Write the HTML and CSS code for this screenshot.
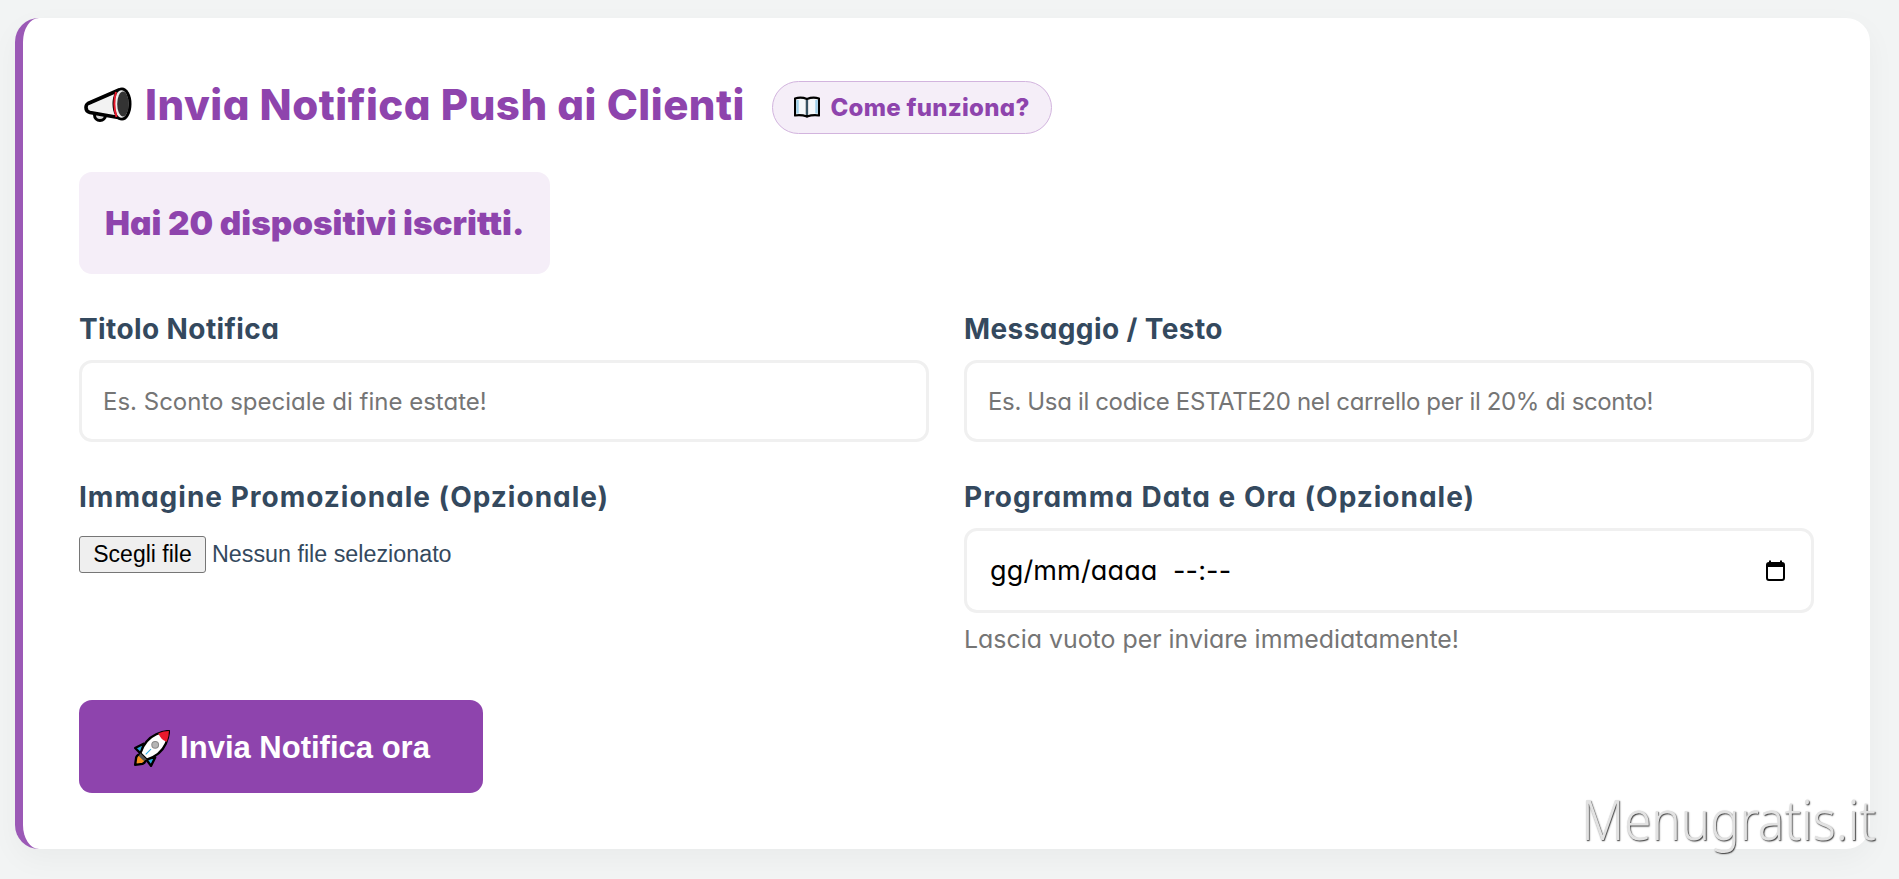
FILE: index.html
```html
<!DOCTYPE html>
<html lang="it">
<head>
<meta charset="utf-8">
<title>Invia Notifica Push ai Clienti</title>
<link rel="stylesheet" href="styles.css">
</head>
<body>
<main class="card">
  <header class="title-row">
    <h1 class="title">
      <svg class="icon-mega" viewBox="0 0 48 36" aria-hidden="true">
        <circle cx="16" cy="28" r="5.5" fill="#d8d8d8" stroke="#000" stroke-width="3"/>
        <path d="M4 16.500 L35 3 L37 31 L6 25.500 Q2 24.500 2 20.500 Q2 17.500 4 16.500 Z" fill="#f2f2f2" stroke="#000" stroke-width="3.600" stroke-linejoin="round"/>
        <ellipse cx="38" cy="17" rx="9.500" ry="16.500" fill="#000"/>
        <ellipse cx="37.500" cy="17" rx="7" ry="13.800" fill="#ececec"/>
        <path d="M32 5 Q28.500 17 32.500 30" fill="none" stroke="#e8192c" stroke-width="2"/>
        <ellipse cx="39" cy="17" rx="5.800" ry="12.500" fill="#333"/>
      </svg>
      <span>Invia Notifica Push ai Clienti</span>
    </h1>
    <button class="help" type="button">
      <svg class="icon-book" viewBox="0 0 26 22" aria-hidden="true">
        <path d="M1 2.500 Q7 0.500 13 3 V20.500 Q7 18.500 1 19.500 Z" fill="#f4f8fb" stroke="#000" stroke-width="2.200" stroke-linejoin="round"/>
        <path d="M25 2.500 Q19 0.500 13 3 V20.500 Q19 18.500 25 19.500 Z" fill="#f4f8fb" stroke="#000" stroke-width="2.200" stroke-linejoin="round"/>
        <path d="M3.500 4 V17.500" stroke="#9fd0ea" stroke-width="2.400"/>
        <path d="M22.500 4 V17.500" stroke="#9fd0ea" stroke-width="2.400"/>
        <path d="M13 4 V19" stroke="#6fa8c9" stroke-width="1"/>
      </svg>
      <span>Come funziona?</span>
    </button>
  </header>

  <div class="info"><strong>Hai 20 dispositivi iscritti.</strong></div>

  <form class="form-grid">
    <div class="field">
      <label class="label">Titolo Notifica</label>
      <input class="text-input" type="text" placeholder="Es. Sconto speciale di fine estate!">
    </div>
    <div class="field">
      <label class="label">Messaggio / Testo</label>
      <input class="text-input text-input-tight" type="text" placeholder="Es. Usa il codice ESTATE20 nel carrello per il 20% di sconto!">
    </div>
    <div class="field">
      <label class="label label-wide">Immagine Promozionale (Opzionale)</label>
      <div class="file-row">
        <button class="file-btn" type="button">Scegli file</button>
        <span class="file-name">Nessun file selezionato</span>
      </div>
    </div>
    <div class="field">
      <label class="label label-wide">Programma Data e Ora (Opzionale)</label>
      <div class="date-input">
        <span class="date-text">gg/mm/aaaa&nbsp;&nbsp;--:--</span>
        <svg class="icon-cal" viewBox="0 0 19 21" aria-hidden="true">
          <path d="M4 0.500 V4 M15 0.500 V4" stroke="#000" stroke-width="2"/>
          <rect x="1" y="3" width="17" height="17" rx="2" fill="none" stroke="#000" stroke-width="2"/>
          <rect x="1" y="3" width="17" height="4" fill="#000"/>
        </svg>
      </div>
      <p class="hint">Lascia vuoto per inviare immediatamente!</p>
    </div>
  </form>

  <button class="submit" type="button">
    <svg class="icon-rocket" viewBox="0 0 35 35" aria-hidden="true">
      <path d="M2 33 L3 26 Q4 23 7 23 L12 28 Q12 31 9 32 Z" fill="#f7931e" stroke="#000" stroke-width="2.200" stroke-linejoin="round"/>
      <path d="M10 13 L2 17 L8 23 Z" fill="#29abe2" stroke="#000" stroke-width="2.200" stroke-linejoin="round"/>
      <path d="M21 26 L17 34 L12 27 Z" fill="#29abe2" stroke="#000" stroke-width="2.200" stroke-linejoin="round"/>
      <path d="M7 22 Q11 9 22 4 Q29 1 34 1 Q34 6 31 13 Q26 24 13 28 Z" fill="#fff" stroke="#000" stroke-width="2.200" stroke-linejoin="round"/>
      <path d="M24 3 Q29 1 34 1 Q34 6 32 11 Q26 9 24 3 Z" fill="#e8192c"/>
      <path d="M7 22 L13 28 L10 29 L5.500 24.500 Z" fill="#555"/>
      <circle cx="21" cy="14" r="3.200" fill="#b5b5b5" stroke="#8a8a8a"/>
      <path d="M12 23 L17 18" stroke="#29abe2" stroke-width="1"/>
    </svg>
    <span>Invia Notifica ora</span>
  </button>
</main>
<div class="watermark">Menugratis.it</div>
</body>
</html>
```

FILE: styles.css
```css
* { box-sizing: border-box; }
html, body { height: 879px; }
body {
  margin: 0;
  background: #f2f4f4;
  font-family: "Inter", "Liberation Sans", sans-serif;
  font-feature-settings: "cv11";
  overflow: hidden;
  position: relative;
}
.card {
  margin: 18px 29px 30px 15px;
  height: 831px;
  background: #fff;
  border-left: 8px solid #9b59b6;
  border-radius: 24px;
  box-shadow: 0 10px 30px rgba(0, 0, 0, 0.04);
  padding: 56px;
}
.title-row {
  display: flex;
  align-items: center;
  height: 66px;
  margin-bottom: 32px;
  padding-left: 5px;
}
.title {
  margin: 0;
  padding-bottom: 5px;
  display: flex;
  align-items: center;
  gap: 13px;
  color: #8e44ad;
  font-size: 42px;
  font-weight: 800;
  letter-spacing: 0.5px;
  white-space: nowrap;
}
.icon-mega { width: 48px; height: 36px; flex: none; }
.help {
  margin-left: 27px;
  height: 53px;
  width: 280px;
  display: flex;
  align-items: center;
  justify-content: center;
  gap: 10px;
  background: #f5eef8;
  border: 1px solid #d2b4de;
  border-radius: 27px;
  color: #8e44ad;
  font-family: inherit;
  font-feature-settings: inherit;
  font-size: 24px;
  font-weight: 800;
  letter-spacing: 0.3px;
  white-space: nowrap;
}
.icon-book { width: 26px; height: 22px; flex: none; }
.info {
  width: 471px;
  height: 102px;
  margin-bottom: 37px;
  padding-left: 26px;
  display: flex;
  align-items: center;
  background: #f5eef8;
  border-radius: 13px;
  color: #8e44ad;
  font-size: 33.300px;
  font-weight: 800;
  white-space: nowrap;
}
.form-grid {
  display: grid;
  grid-template-columns: 1fr 1fr;
  column-gap: 35px;
  row-gap: 37px;
}
.field { display: flex; flex-direction: column; }
.label {
  height: 36px;
  line-height: 36px;
  margin-bottom: 13px;
  color: #34495e;
  font-size: 28px;
  font-weight: 700;
  letter-spacing: 0.4px;
  white-space: nowrap;
}
.label-wide { letter-spacing: 1px; }
.text-input {
  width: 100%;
  height: 82px;
  padding: 0 21px;
  background: #fff;
  border: 3px solid #f0f0f0;
  border-radius: 13px;
  font-family: inherit;
  font-feature-settings: inherit;
  font-size: 24px;
  outline: none;
}
.text-input-tight { letter-spacing: -0.35px; }
.text-input::placeholder { color: #757575; opacity: 1; }
.file-row {
  display: flex;
  align-items: center;
  gap: 6px;
  padding-top: 8px;
}
.file-btn {
  width: 127px;
  height: 37px;
  padding: 0;
  background: #efefef;
  border: 1px solid #767676;
  border-radius: 3px;
  color: #000;
  font-family: "Liberation Sans", Arial, sans-serif;
  font-size: 23px;
}
.file-name {
  color: #34495e;
  font-family: "Liberation Sans", Arial, sans-serif;
  font-size: 23.300px;
}
.date-input {
  height: 85px;
  padding: 0 26px 0 23px;
  display: flex;
  align-items: center;
  justify-content: space-between;
  background: #fff;
  border: 3px solid #f0f0f0;
  border-radius: 13px;
}
.date-text { color: #000; font-size: 27px; letter-spacing: 0.15px; }
.icon-cal { width: 19px; height: 21px; flex: none; }
.hint {
  margin: 11px 0 0;
  height: 30px;
  line-height: 30px;
  color: #757575;
  font-size: 24.900px;
  white-space: nowrap;
}
.submit {
  margin-top: 46px;
  width: 404px;
  height: 93px;
  padding: 3px 0 0 1px;
  display: flex;
  align-items: center;
  justify-content: center;
  gap: 10px;
  background: #8e44ad;
  border: 0;
  border-radius: 13px;
  color: #fff;
  font-family: "Liberation Sans", Arial, sans-serif;
  font-size: 31px;
  font-weight: 700;
  white-space: nowrap;
}
.icon-rocket { width: 37px; height: 37px; flex: none; }
.watermark {
  position: absolute;
  right: 23px;
  bottom: 33px;
  color: #e2e2e2;
  font-family: "Noto Sans", sans-serif;
  font-size: 56px;
  font-weight: 300;
  line-height: 1;
  text-shadow: 1px 1px 1.500px #333;
  transform: scaleX(0.88);
  transform-origin: right center;
}
```
